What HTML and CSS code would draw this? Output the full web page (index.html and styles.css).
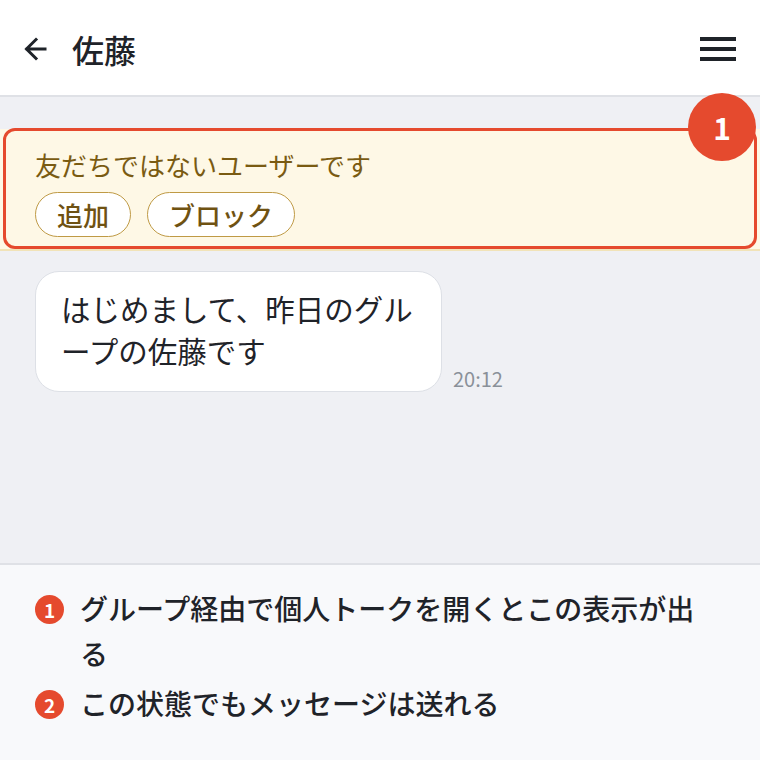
FILE: index.html
```html
<!DOCTYPE html>
<html lang="ja">
<head>
<meta charset="utf-8">
<link rel="stylesheet" href="styles.css">
</head>
<body>
<div class="screen">
  <header class="topbar">
    <svg class="back" width="26" height="26" viewBox="0 0 26 26"><path d="M22 13H4M13 3.5L3.5 13l9.5 9.5" fill="none" stroke="#1f2329" stroke-width="3" stroke-linecap="square"/></svg>
    <h1 class="title">佐藤</h1>
    <svg class="menu" width="36" height="26" viewBox="0 0 36 26"><rect x="0" y="1" width="36" height="4" fill="#1f2329"/><rect x="0" y="11" width="36" height="4" fill="#1f2329"/><rect x="0" y="21" width="36" height="4" fill="#1f2329"/></svg>
  </header>
  <main class="chat">
    <section class="notice">
      <p class="notice-text">友だちではないユーザーです</p>
      <div class="notice-actions">
        <button class="pill">追加</button>
        <button class="pill">ブロック</button>
      </div>
      <div class="highlight"></div>
      <span class="badge">1</span>
    </section>
    <div class="msg-row">
      <div class="bubble">はじめまして、昨日のグループの佐藤です</div>
      <span class="time">20:12</span>
    </div>
  </main>
  <footer class="legend">
    <div class="legend-item"><span class="dot">1</span><span class="legend-text">グループ経由で個人トークを開くとこの表示が出る</span></div>
    <div class="legend-item"><span class="dot">2</span><span class="legend-text">この状態でもメッセージは送れる</span></div>
  </footer>
</div>
</body>
</html>
```
FILE: styles.css
```css
* { box-sizing: border-box; margin: 0; padding: 0; }
html, body { width: 760px; height: 760px; overflow: hidden; }
body {
  font-family: "Noto Sans CJK JP", "Noto Sans", sans-serif;
  color: #1f2329;
  background: #f8f9fb;
}
.screen { display: flex; flex-direction: column; height: 760px; }
.topbar {
  height: 97px;
  flex: none;
  display: flex;
  align-items: center;
  padding: 0 24px 0 23px;
  background: #fff;
  border-bottom: 2px solid #dfe1e6;
}
.back { flex: none; margin-top: 2px; }
.title {
  font-size: 32px;
  font-weight: 500;
  margin-left: 23px;
  line-height: 1;
  flex: 1;
  margin-top: 2px;
}
.menu { flex: none; margin-top: 2px; }
.chat {
  height: 468px;
  flex: none;
  background: #eff0f4;
  padding-top: 32px;
  border-bottom: 2px solid #dfe1e6;
}
.notice {
  position: relative;
  background: #fef8e6;
  border-bottom: 2px solid #f1e3b8;
  padding: 18px 35px 13px;
  height: 122px;
}
.notice-text {
  font-size: 26px;
  line-height: 36px;
  color: #7a5b12;
}
.notice-actions { display: flex; gap: 16px; margin-top: 9px; }
.pill {
  font-family: inherit;
  font-size: 26px;
  font-weight: 500;
  color: #6f5212;
  background: #fff;
  border: 1.5px solid #bf9a45;
  border-radius: 23px;
  height: 45px;
  padding: 0 21px;
  line-height: 1;
}
.highlight {
  position: absolute;
  left: 3px;
  right: 3px;
  top: -1px;
  bottom: 0;
  border: 3px solid #e54a2e;
  border-radius: 12px;
  pointer-events: none;
}
.badge {
  position: absolute;
  right: 4px;
  top: -36px;
  width: 68px;
  height: 68px;
  border-radius: 50%;
  background: #e54a2e;
  color: #fff;
  font-size: 30px;
  font-weight: 700;
  display: flex;
  align-items: center;
  justify-content: center;
  line-height: 1;
}
.msg-row {
  display: flex;
  align-items: flex-end;
  padding-left: 35px;
  margin-top: 20px;
}
.bubble {
  width: 407px;
  background: #fff;
  border: 1.5px solid #dde0e6;
  border-radius: 24px;
  padding: 15px 24px 20px 25px;
  font-size: 29.5px;
  line-height: 42px;
  color: #1f2329;
}
.time {
  font-size: 20px;
  color: #8a9099;
  margin-left: 11px;
  line-height: 1;
  margin-bottom: 3px;
}
.legend {
  flex: 1;
  background: #f8f9fb;
  padding: 21px 50px 0 35px;
}
.legend-item {
  display: flex;
  align-items: flex-start;
  gap: 16px;
  margin-bottom: 5px;
}
.dot {
  flex: none;
  width: 29px;
  height: 29px;
  border-radius: 50%;
  background: #e54a2e;
  color: #fff;
  font-size: 19px;
  font-weight: 700;
  display: flex;
  align-items: center;
  justify-content: center;
  margin-top: 9px;
  line-height: 1;
}
.legend-text {
  font-size: 28px;
  font-weight: 500;
  line-height: 45px;
  color: #1f2329;
}
```
